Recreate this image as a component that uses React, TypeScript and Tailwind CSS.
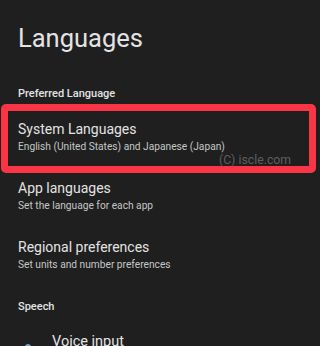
import React from "react";

type Row = { title: string; sub: string };

const rows: Row[] = [
  { title: "App languages", sub: "Set the language for each app" },
  { title: "Regional preferences", sub: "Set units and number preferences" },
];

function RowText({ title, sub }: Row) {
  return (
    <div>
      <div className="text-[14px] leading-[20px] text-[#e3e3e3]">{title}</div>
      <div className="text-[10.2px] leading-[16px] text-[#c4c7c5]">{sub}</div>
    </div>
  );
}

export default function App() {
  return (
    <div
      className="w-[320px] h-[346px] overflow-hidden bg-[#1f1f1f]"
      style={{ fontFamily: "Roboto, 'Noto Sans', sans-serif" }}
    >
      <div className="pt-[20px] px-[18px] text-[25.5px] leading-[36px] text-[#e3e3e3]">Languages</div>

      <div className="mt-[30px] px-[18px] text-[11px] leading-[16px] font-medium text-[#e3e3e3]">
        Preferred Language
      </div>

      {/* highlighted row */}
      <div className="relative mt-[2px] ml-[1px] w-[315px] h-[69px] rounded-[5px] border-[7px] border-[#fa3546] pl-[10px] pt-[8px]">
        <RowText title="System Languages" sub="English (United States) and Japanese (Japan)" />
        <div className="absolute left-[211px] top-[41px] text-[12.3px] leading-[16px] text-[#5e5e5e]">
          (C) iscle.com
        </div>
      </div>

      <div className="px-[18px] pt-[5px]">
        <RowText {...rows[0]} />
      </div>
      <div className="px-[18px] pt-[23px]">
        <RowText {...rows[1]} />
      </div>

      <div className="mt-[26px] px-[18px] text-[11px] leading-[16px] font-medium text-[#e3e3e3]">Speech</div>

      <div className="mt-[17px] flex items-start">
        <div className="w-[52px] flex justify-center pl-[3px] pt-[12px]">
          <svg width="14" height="18" viewBox="0 0 14 18" fill="#7f9fc9">
            <rect x="4" y="0" width="6" height="11" rx="3" />
          </svg>
        </div>
        <div className="text-[14.5px] leading-[20px] text-[#e3e3e3]">Voice input</div>
      </div>
    </div>
  );
}
